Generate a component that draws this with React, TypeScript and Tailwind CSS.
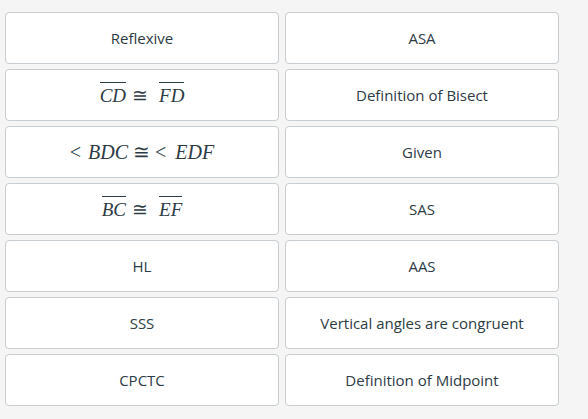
import React from "react"

const math = "font-['Liberation_Serif','DejaVu_Serif',serif] text-[19px] leading-none"

function Ov({ children }: { children: React.ReactNode }) {
  return <span className="border-t border-[#2d3b45] pt-[2px] italic">{children}</span>
}

function I({ children }: { children: React.ReactNode }) {
  return <span className="italic">{children}</span>
}

const left: React.ReactNode[] = [
  "Reflexive",
  <span className={math}>
    <Ov>CD</Ov>
    <span className="mx-[6px]">≅</span>
    <span className="ml-[5px]">
      <Ov>FD</Ov>
    </span>
  </span>,
  <span className={math + " text-[20px]"}>
    <span className="mr-[7px]">&lt;</span>
    <I>BDC</I>
    <span className="mx-[5px]">≅</span>
    <span className="mr-[9px]">&lt;</span>
    <I>EDF</I>
  </span>,
  <span className={math}>
    <Ov>BC</Ov>
    <span className="mx-[6px]">≅</span>
    <span className="ml-[5px]">
      <Ov>EF</Ov>
    </span>
  </span>,
  "HL",
  "SSS",
  "CPCTC",
]

const right = [
  "ASA",
  "Definition of Bisect",
  "Given",
  "SAS",
  "AAS",
  "Vertical angles are congruent",
  "Definition of Midpoint",
]

function Tile({ children }: { children: React.ReactNode }) {
  return (
    <div className="h-[52px] bg-white border border-[#c7cdd1] rounded-[4px] flex items-center justify-center text-[15px] text-[#2d3b45]">
      {children}
    </div>
  )
}

export default function App() {
  return (
    <div className="w-[588px] h-[419px] bg-[#f5f5f5] pt-[12px] pl-[5px] font-['Open_Sans',sans-serif]">
      <div className="w-[554px] grid grid-cols-2 gap-x-[6px] gap-y-[5px]">
        {left.map((item, i) => (
          <React.Fragment key={i}>
            <Tile>{item}</Tile>
            <Tile>{right[i]}</Tile>
          </React.Fragment>
        ))}
      </div>
    </div>
  )
}
